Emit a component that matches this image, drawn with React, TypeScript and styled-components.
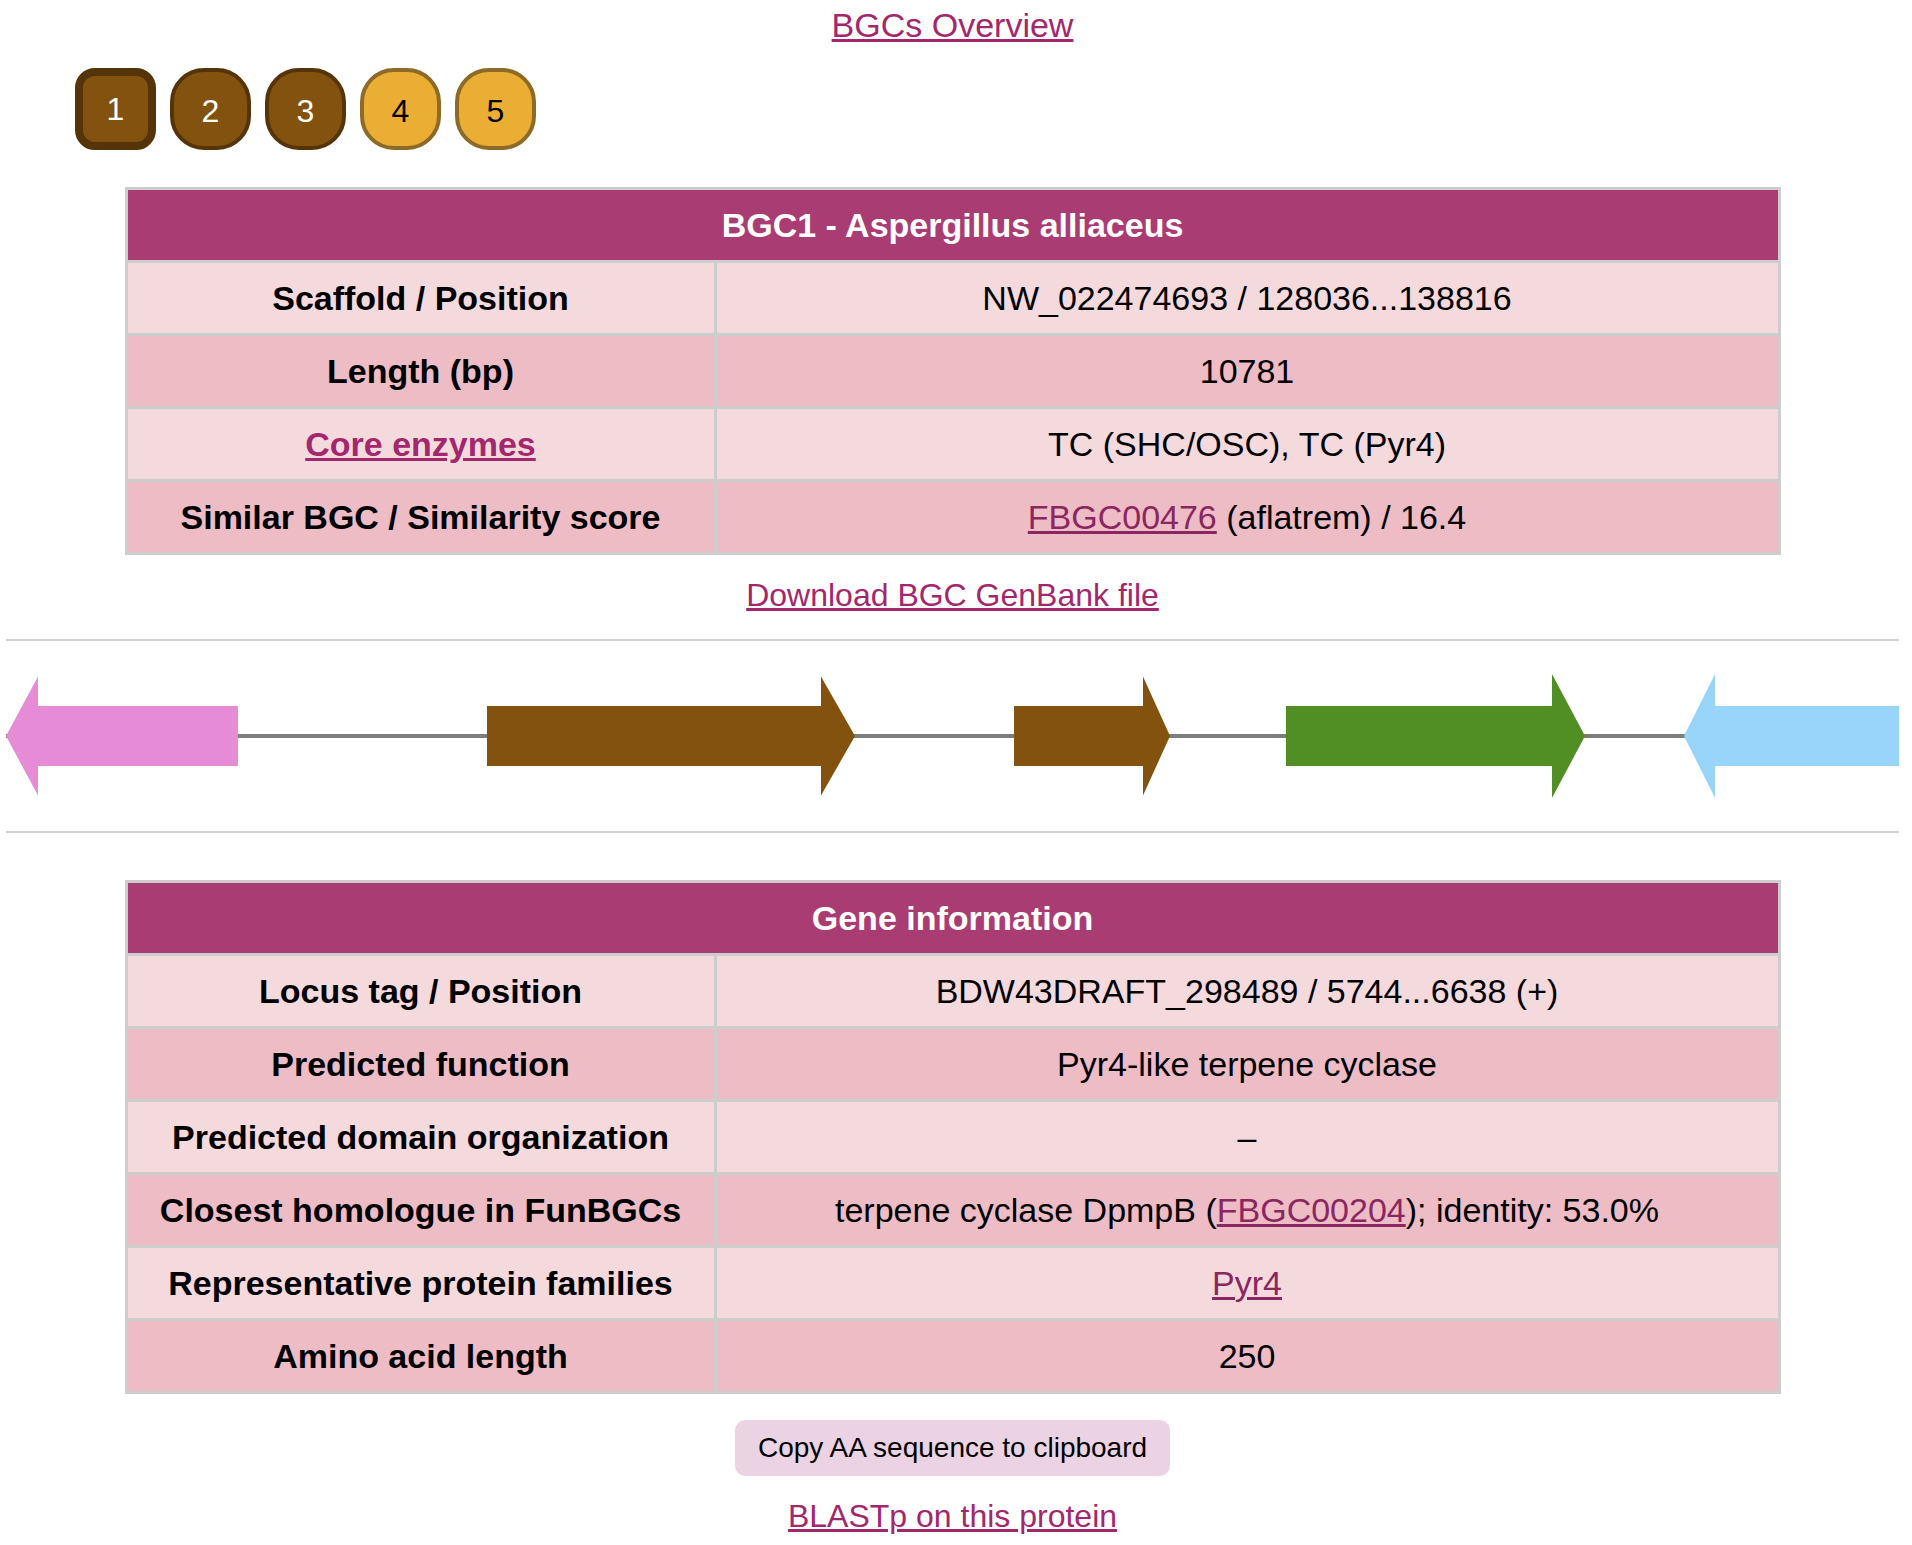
import React from "react";
import styled, { createGlobalStyle, css } from "styled-components";

const GlobalStyle = createGlobalStyle`
  html, body {
    margin: 0;
    padding: 0;
    background: #ffffff;
  }
  body {
    font-family: "Liberation Sans", Arial, Helvetica, sans-serif;
    color: #000000;
  }
`;

const Page = styled.div`
  width: 1905px;
  padding-top: 6px;
  display: flex;
  flex-direction: column;
  align-items: center;
`;

const TopLink = styled.a`
  display: block;
  font-size: 34px;
  line-height: 39px;
  height: 39px;
  color: #a3276d;
  text-decoration: underline;
  cursor: pointer;
`;

const Pager = styled.div`
  align-self: flex-start;
  margin: 23px 0 0 75px;
  display: flex;
  gap: 14px;
`;

const PageButton = styled.button<{ $tone: "brown" | "gold"; $active?: boolean }>`
  box-sizing: border-box;
  width: 81px;
  height: 82px;
  display: flex;
  align-items: center;
  justify-content: center;
  font-family: "Liberation Sans", Arial, Helvetica, sans-serif;
  font-size: 32px;
  cursor: pointer;
  border-style: solid;
  ${(p) =>
    p.$tone === "brown"
      ? css`
          background: #84520f;
          border-color: #55340a;
          color: #ffffff;
        `
      : css`
          background: #ebae35;
          border-color: #8d6a26;
          color: #000000;
        `}
  ${(p) =>
    p.$active
      ? css`
          padding: 0;
          border-width: 8px;
          border-radius: 20px;
        `
      : css`
          padding: 4px 0 0 0;
          border-width: 4px;
          border-radius: 34px;
        `}
`;

const InfoTable = styled.div<{ $top: number }>`
  box-sizing: border-box;
  width: 1656px;
  margin-top: ${(p) => p.$top}px;
  display: grid;
  grid-template-columns: 586px 1fr;
  grid-auto-rows: 70px;
  gap: 3px;
  padding: 3px;
  background: #cdcdcd;
`;

const HeaderCell = styled.div`
  grid-column: 1 / span 2;
  background: #aa3c74;
  color: #ffffff;
  font-weight: bold;
  font-size: 34px;
  display: flex;
  align-items: center;
  justify-content: center;
`;

const Cell = styled.div<{ $shade: "light" | "dark"; $label?: boolean }>`
  background: ${(p) => (p.$shade === "light" ? "#f5dadd" : "#edbcc5")};
  font-size: 34px;
  font-weight: ${(p) => (p.$label ? "bold" : "normal")};
  display: flex;
  align-items: center;
  justify-content: center;
  white-space: pre;
`;

const CellLink = styled.a<{ $strong?: boolean }>`
  color: ${(p) => (p.$strong ? "#a3276d" : "#8a2660")};
  text-decoration: underline;
  cursor: pointer;
`;

const PlainLink = styled.a`
  display: block;
  margin-top: 22px;
  font-size: 32px;
  line-height: 37px;
  height: 37px;
  color: #a3276d;
  text-decoration: underline;
  cursor: pointer;
`;

const Rule = styled.div<{ $top: number }>`
  align-self: stretch;
  margin: ${(p) => p.$top}px 6px 0 6px;
  height: 2px;
  background: #cfcfcf;
`;

const Diagram = styled.svg`
  display: block;
  align-self: stretch;
  margin: 0 6px;
  width: 1893px;
  height: 190px;
`;

const CopyButton = styled.button`
  margin-top: 26px;
  box-sizing: border-box;
  height: 56px;
  padding: 0 23px;
  border: none;
  border-radius: 10px;
  background: #ecd3e3;
  color: #000000;
  font-family: "Liberation Sans", Arial, Helvetica, sans-serif;
  font-size: 28px;
  cursor: pointer;
`;

type Row = { label: React.ReactNode; value: React.ReactNode };

const bgcRows: Row[] = [
  { label: "Scaffold / Position", value: "NW_022474693 / 128036...138816" },
  { label: "Length (bp)", value: "10781" },
  { label: <CellLink $strong>Core enzymes</CellLink>, value: "TC (SHC/OSC), TC (Pyr4)" },
  {
    label: "Similar BGC / Similarity score",
    value: (
      <>
        <CellLink>FBGC00476</CellLink> (aflatrem) / 16.4
      </>
    ),
  },
];

const geneRows: Row[] = [
  { label: "Locus tag / Position", value: "BDW43DRAFT_298489 / 5744...6638 (+)" },
  { label: "Predicted function", value: "Pyr4-like terpene cyclase" },
  { label: "Predicted domain organization", value: "\u2013" },
  {
    label: "Closest homologue in FunBGCs",
    value: (
      <>
        terpene cyclase DpmpB (<CellLink>FBGC00204</CellLink>); identity: 53.0%
      </>
    ),
  },
  { label: "Representative protein families", value: <CellLink>Pyr4</CellLink> },
  { label: "Amino acid length", value: "250" },
];

function DataTable({ title, rows, top }: { title: string; rows: Row[]; top: number }) {
  return (
    <InfoTable $top={top}>
      <HeaderCell>{title}</HeaderCell>
      {rows.map((r, i) => {
        const shade = i % 2 === 0 ? "light" : "dark";
        return (
          <React.Fragment key={i}>
            <Cell $shade={shade} $label>
              {r.label}
            </Cell>
            <Cell $shade={shade}>{r.value}</Cell>
          </React.Fragment>
        );
      })}
    </InfoTable>
  );
}

type Gene = { start: number; base: number; tip: number; head: number; color: string };

const genes: Gene[] = [
  { tip: 0, base: 32, start: 232, head: 59.5, color: "#e68bd6" },
  { start: 481, base: 815, tip: 849, head: 59.5, color: "#84520f" },
  { start: 1008, base: 1137, tip: 1164, head: 59.5, color: "#84520f" },
  { start: 1280, base: 1546, tip: 1579, head: 62, color: "#518e23" },
  { tip: 1678, base: 1709, start: 1893, head: 62, color: "#99d5fb" },
];

function arrowPoints(g: Gene, c: number, shaft: number) {
  return [
    [g.start, c - shaft],
    [g.base, c - shaft],
    [g.base, c - g.head],
    [g.tip, c],
    [g.base, c + g.head],
    [g.base, c + shaft],
    [g.start, c + shaft],
  ]
    .map((p) => p.join(","))
    .join(" ");
}

function GeneMap() {
  const c = 95;
  return (
    <Diagram viewBox="0 0 1893 190">
      <line x1={0} y1={c} x2={1893} y2={c} stroke="#7d7d7d" strokeWidth={4} />
      {genes.map((g, i) => (
        <polygon key={i} points={arrowPoints(g, c, 30)} fill={g.color} />
      ))}
    </Diagram>
  );
}

export default function App() {
  return (
    <>
      <GlobalStyle />
      <Page>
        <TopLink>BGCs Overview</TopLink>
        <Pager>
          <PageButton $tone="brown" $active>1</PageButton>
          <PageButton $tone="brown">2</PageButton>
          <PageButton $tone="brown">3</PageButton>
          <PageButton $tone="gold">4</PageButton>
          <PageButton $tone="gold">5</PageButton>
        </Pager>
        <DataTable title="BGC1 - Aspergillus alliaceus" rows={bgcRows} top={37} />
        <PlainLink>Download BGC GenBank file</PlainLink>
        <Rule $top={25} />
        <GeneMap />
        <Rule $top={0} />
        <DataTable title="Gene information" rows={geneRows} top={47} />
        <CopyButton>Copy AA sequence to clipboard</CopyButton>
        <PlainLink>BLASTp on this protein</PlainLink>
      </Page>
    </>
  );
}
